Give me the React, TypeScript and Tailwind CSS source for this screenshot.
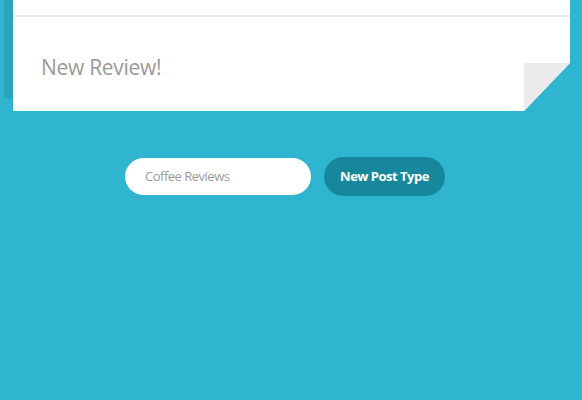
export default function App() {
  return (
    <div
      className="relative w-[582px] h-[400px] overflow-hidden bg-[#2fb5cf]"
      style={{ fontFamily: '"Open Sans", "Liberation Sans", sans-serif' }}
    >
      {/* card peeking behind */}
      <div className="absolute left-[4px] top-0 w-[14px] h-[99px] rounded-bl-[4px] bg-[#29a5bd]" />

      <div className="relative ml-[13px] mr-[12px] bg-white">
        <div className="h-[17px] border-b-2 border-[#ececec]" />
        <div className="h-[94px] pl-[28px] pt-[40px] text-[21px] leading-none tracking-[-0.3px] text-[#999999]">
          New Review!
        </div>
        {/* folded corner */}
        <svg className="absolute right-0 bottom-0" width="46" height="48" viewBox="0 0 46 48">
          <path d="M46 0 L46 48 L0 48 Z" fill="#2fb5cf" />
          <path d="M3 0 L46 0 L0 48 L0 3 Q0 0 3 0 Z" fill="#ebebeb" />
        </svg>
      </div>

      <div className="mt-[46px] flex justify-center gap-[13px] pr-[12px]">
        <div className="w-[186px] h-[37px] mt-[1px] rounded-full bg-white flex items-center pl-[20px] text-[13px] tracking-[-0.5px] text-[#9a9a9a]">
          Coffee Reviews
        </div>
        <button className="w-[121px] h-[39px] rounded-full bg-[#17889b] text-white text-[13px] font-bold tracking-[-0.5px]">
          New Post Type
        </button>
      </div>
    </div>
  )
}
